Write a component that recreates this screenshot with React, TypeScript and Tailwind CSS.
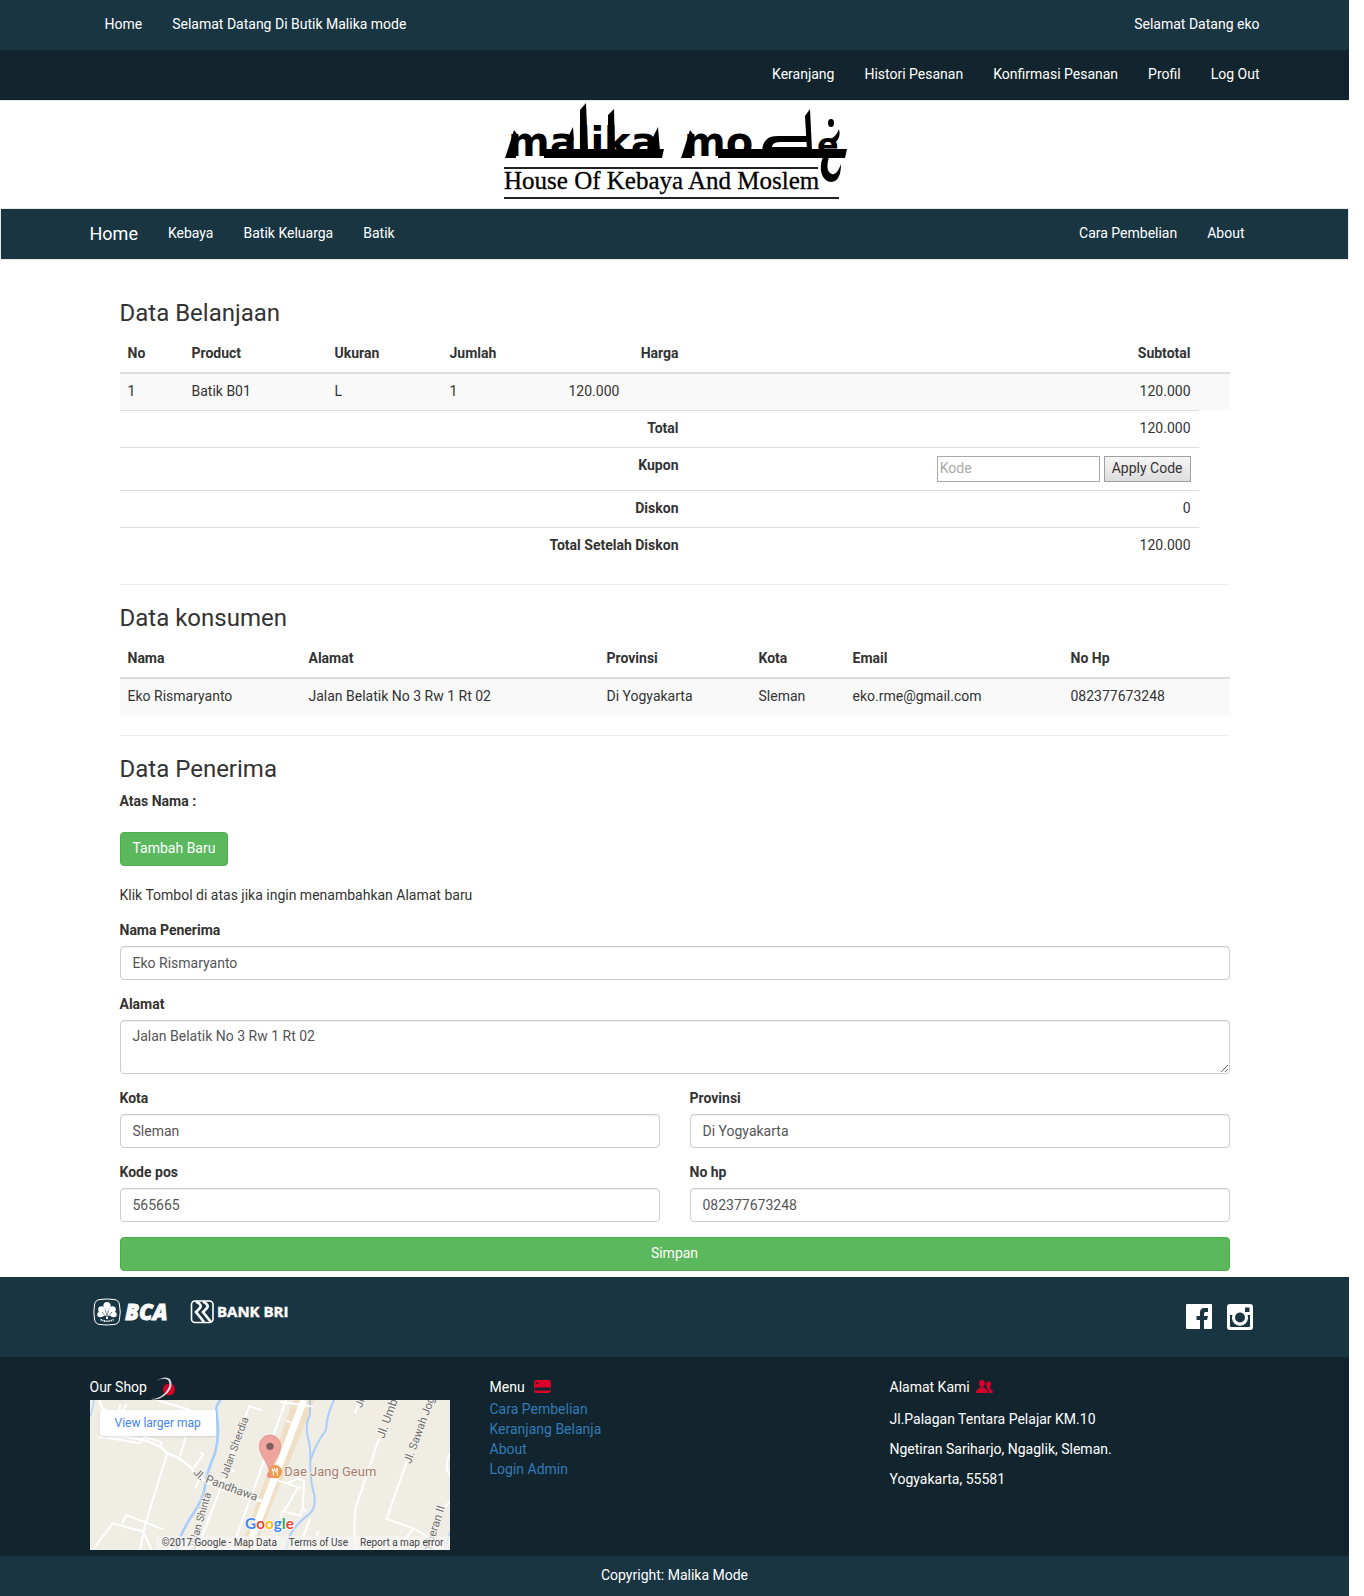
import type { ReactNode } from "react";

const cartTotals = [
  { label: "Total", value: "120.000" },
  { label: "Kupon", coupon: true },
  { label: "Diskon", value: "0" },
  { label: "Total Setelah Diskon", value: "120.000" },
];

function NavLink({ children }: { children: ReactNode }) {
  return (
    <a href="#" className="block px-[15px] pt-[14px] pb-4 text-white hover:underline">
      {children}
    </a>
  );
}

function Logo() {
  return (
    <svg width="345" height="100" viewBox="0 0 345 100" role="img" aria-label="Malika Mode, House Of Kebaya And Moslem">
      <g fill="#000" fontFamily="'DejaVu Sans', sans-serif" fontWeight="700" fontSize="40">
        <text x="4" y="55">malika</text>
        <text x="180" y="55">mo</text>
        <text x="313" y="55" fontSize="32">e</text>
      </g>
      <path d="M4 48H12V57H1Z M40 48H160L158 57H40Z M180 48H188V57H177Z M214 48H343L341 57H214Z" />
      <path d="M76 50V9L82 2L84 50Z M104 50V14L110 8L111 50Z M303 50L301 15L306 8L308 50Z" />
      <path d="M4 48L10 29L14 34L12 48Z M180 48L186 29L190 34L188 48Z M64 36L69 26L70 40Z M149 36L154 26L156 50H149Z" />
      <path d="M258 50C259 39 264 35 274 35H303V41H276C270 41 268 44 268 46H304V50Z" />
      <ellipse cx="327" cy="22" rx="3" ry="4" />
      <path d="M326 38Q332 36 335 28Q337 36 332 41Z" />
      <path d="M319 56C314 68 318 81 328 81C335 80 337 72 337 63C334 71 331 74 328 73C322 71 323 63 325 56Z" />
      <path d="M0 66H314V68H0Z M0 96H335V98H0Z" fill="#222" />
      <text x="0" y="88" fontFamily="'Liberation Serif', serif" fontSize="25" stroke="#000" strokeWidth="0.3">
        House Of Kebaya And Moslem
      </text>
    </svg>
  );
}

function Bca() {
  return (
    <svg width="84" height="28" viewBox="0 0 84 28" role="img" aria-label="BCA">
      <path d="M7 1.500Q14 .5 21 1.500Q26 2 26.500 7Q28 14 26.500 21Q26 26 21 26.500Q14 27.500 7 26.500Q2 26 1.500 21Q.2 14 1.500 7Q2 2 7 1.500Z" fill="none" stroke="#fff" strokeWidth="1" />
      <g fill="#fff">
        <circle cx="14" cy="7.500" r="3.600" />
        <circle cx="8.500" cy="11.500" r="3.300" />
        <circle cx="19.500" cy="11.500" r="3.300" />
        <ellipse cx="7.500" cy="16.500" rx="3.300" ry="2.700" />
        <ellipse cx="20.500" cy="16.500" rx="3.300" ry="2.700" />
        <path d="M14 8L18 14L21 18H15V21H13V18H7L10 14Z" />
      </g>
      <path d="M14 19L12.500 12M14 19L15.500 12M13 19L9 14M15 19L19 14" stroke="#1a3542" strokeWidth="0.600" />
      <path d="M7.500 21.500Q14 25 20.500 21.500" fill="none" stroke="#fff" strokeWidth="1.600" strokeDasharray="1.200 .6" />
      <text x="32" y="22" fill="#fff" stroke="#fff" strokeWidth="0.800" fontFamily="'Open Sans', sans-serif" fontStyle="italic" fontWeight="800" fontSize="22">BCA</text>
    </svg>
  );
}

function Bri() {
  return (
    <svg width="106" height="28" viewBox="0 0 106 28" role="img" aria-label="Bank BRI">
      <rect x="1.500" y="3" width="21.500" height="21.500" rx="3.500" fill="none" stroke="#fff" strokeWidth="1.600" />
      <g fill="none" stroke="#fff" strokeWidth="2.600">
        <path d="M6 3.500Q13 7 9.500 10.500L6 14L14 24" />
        <path d="M13 3.500Q20 7 16.500 10.500L13 14L21 24" />
      </g>
      <text x="27" y="19" fill="#fff" stroke="#fff" strokeWidth="0.400" fontFamily="'Open Sans', sans-serif" fontWeight="700" fontSize="15">BANK BRI</text>
    </svg>
  );
}

function Facebook() {
  return (
    <svg width="26" height="26" viewBox="0 0 26 26" aria-hidden="true">
      <path fill="#fff" fillRule="evenodd" d="M1 0H25Q26 0 26 1V24Q26 25 25 25H18V16H21L22 12H18V9.500Q18 8 19.500 8H22V4H18.500Q14 4 14 8.500V12H10.500V16H14V25H1Q0 25 0 24V1Q0 0 1 0Z" />
    </svg>
  );
}

function Instagram() {
  return (
    <svg width="26" height="26" viewBox="0 0 26 26" aria-hidden="true">
      <path
        fill="#fff"
        fillRule="evenodd"
        d="M3 0H23Q26 0 26 3V23Q26 26 23 26H3Q0 26 0 23V3Q0 0 3 0ZM18 3.500V8H22.500V3.500ZM3 11V22Q3 23 4 23H22Q23 23 23 22V11H20.500A8 8 0 1 1 5.500 11ZM13 8.500A5 5 0 1 0 13 18.500A5 5 0 1 0 13 8.500Z"
      />
    </svg>
  );
}

function ShopMap() {
  return (
    <div className="relative h-[150px] w-[360px] max-w-full overflow-hidden bg-[#f0ede5]">
      <svg width="360" height="150" viewBox="30 105 1080 450" aria-hidden="true">
        <path d="M640 105H705L520 555H480Z" fill="#f0dfc4" />
        <g fill="none" stroke="#aacdfb" strokeWidth="8">
          <path d="M422 105Q405 120 410 150Q420 210 405 265Q380 320 372 380Q360 420 330 460Q300 510 288 555" />
          <path d="M690 105V150Q675 175 683 215Q692 240 691 290Q690 350 704 395Q706 430 690 445Q650 475 630 510L618 555" strokeWidth="6" />
          <path d="M762 105Q740 150 738 195Q705 240 692 285" strokeWidth="6" />
          <path d="M42 105Q40 130 30 155M1110 500L1095 555" strokeWidth="4" />
        </g>
        <g fill="none" stroke="#fff" strokeWidth="6">
          <path d="M60 105Q60 135 85 140M85 213Q220 215 262 265Q320 285 350 330Q400 370 530 405L550 408" strokeWidth="8" />
          <path d="M55 215L125 225L180 235L192 215L245 232L242 245M318 213L300 275M230 105L330 135" />
          <path d="M262 265L195 480L180 555M40 552L98 475L190 500L215 555M128 475L138 450L250 493M140 118L130 135M120 118V135" />
          <path d="M358 262L370 268L340 310M345 370L365 330M548 137L508 123L440 310L465 320M445 310L350 555" />
          <path d="M618 105L455 555M600 110L700 125M575 340L620 355L655 340L672 348L668 430L680 440M620 355L665 370M655 365L612 440L660 452L668 430M612 435L600 455M690 460L655 555M715 498L695 555" />
          <path d="M838 105L825 145M897 220L825 435L823 500L828 555M980 290L920 462L1000 490L1060 525M1000 490L970 530M1110 265Q1090 310 1110 330M1090 430L1110 410" />
        </g>
        <path d="M672 105L515 520" stroke="#fff" strokeWidth="21" />
        <path d="M618 167L634 173" stroke="#fff" strokeWidth="5" />
        <g fill="#707070" stroke="#f5f3ed" strokeWidth="6" paintOrder="stroke" fontFamily="Roboto, sans-serif" fontSize="32">
          <text transform="translate(440 342) rotate(-70)">Jalan Sherdia</text>
          <text transform="translate(345 555) rotate(-74)">Jalan Shinta</text>
          <text transform="translate(338 325) rotate(42)">Jl.</text>
          <text transform="translate(374 352) rotate(20)" fontSize="35">Pandhawa</text>
          <text transform="translate(845 130) rotate(-70)">Jl.</text>
          <text transform="translate(912 222) rotate(-70)" fontSize="36">Jl. Umbul</text>
          <text transform="translate(992 298) rotate(-70)" fontSize="34">Jl. Sawah Joglo</text>
          <text transform="translate(1050 565) rotate(-72)" fontSize="35">mberan II</text>
        </g>
        <path d="M570 330C565 285 538 275 538 243A32 33 0 0 1 602 243C602 275 576 285 570 330Z" fill="#efa59d" stroke="#dd8b83" strokeWidth="2" />
        <circle cx="570" cy="244" r="11" fill="#80605d" />
        <circle cx="570" cy="330" r="9" fill="#e98b80" />
        <circle cx="586" cy="320" r="20" fill="#f19a4d" />
        <path d="M577 309V318M583 309V318M577 317H583M580 317V332M592 332V309Q586 311 588 321H592" fill="none" stroke="#fff" strokeWidth="3" />
        <text x="613" y="333" fill="#a87e70" stroke="#f5f3ed" strokeWidth="5" paintOrder="stroke" fontFamily="Roboto, sans-serif" fontSize="39">Dae Jang Geum</text>
        <text x="495" y="493" stroke="#fff" strokeWidth="5" paintOrder="stroke" fontFamily="Lato, sans-serif" fontWeight="700" fontSize="46">
          <tspan fill="#4285f4">G</tspan><tspan fill="#ea4335">o</tspan><tspan fill="#fbbc05">o</tspan><tspan fill="#4285f4">g</tspan><tspan fill="#34a853">l</tspan><tspan fill="#ea4335">e</tspan>
        </text>
      </svg>
      <a href="#" className="absolute top-[10px] left-[10px] rounded-xs bg-white px-[15px] py-[5px] text-[12px] leading-4 text-[#4285f4] shadow">
        View larger map
      </a>
      <div className="absolute right-0 bottom-0 flex bg-[#f5f5f5]/70 text-[10px] leading-[14px] text-[#444]">
        <span className="px-[6px]">©2017 Google - Map Data</span>
        <a href="#" className="px-[6px]">Terms of Use</a>
        <a href="#" className="px-[6px]">Report a map error</a>
      </div>
    </div>
  );
}

function Field({ id, label, value, area }: { id: string; label: string; value: string; area?: boolean }) {
  const look = "block w-full rounded border border-[#ccc] bg-white px-3 leading-5 text-[#555] shadow-[inset_0_1px_1px_rgba(0,0,0,0.075)] outline-none focus:border-[#66afe9]";
  return (
    <div>
      <label htmlFor={id} className="mb-[6px] block font-bold">{label}</label>
      {area ? (
        <textarea id={id} defaultValue={value} className={`${look} h-[54px] py-[5px]`} />
      ) : (
        <input id={id} type="text" defaultValue={value} className={`${look} h-[34px] py-[6px]`} />
      )}
    </div>
  );
}

function Heading({ children }: { children: ReactNode }) {
  return <h3 className="mb-[10px] text-[24px] leading-[26px] font-normal">{children}</h3>;
}

export default function App() {
  return (
    <div className="bg-white pr-[15px] font-[Roboto,sans-serif] text-[14px] leading-5 text-[#333]">
      <header>
        <div className="bg-[#1a3542]">
          <nav className="mx-auto flex max-w-[1170px] justify-between">
            <div className="flex">
              <NavLink>Home</NavLink>
              <NavLink>Selamat Datang Di Butik Malika mode</NavLink>
            </div>
            <div className="-mr-[15px]"><NavLink>Selamat Datang eko</NavLink></div>
          </nav>
        </div>
        <div className="bg-[#12252e]">
          <nav className="mx-auto flex max-w-[1170px] justify-end">
            <div className="-mr-[15px] flex">
              <NavLink>Keranjang</NavLink>
              <NavLink>Histori Pesanan</NavLink>
              <NavLink>Konfirmasi Pesanan</NavLink>
              <NavLink>Profil</NavLink>
              <NavLink>Log Out</NavLink>
            </div>
          </nav>
        </div>
        <div className="flex justify-center border-t border-[#e7e7e7] pb-[7px] pl-1">
          <Logo />
        </div>
        <div className="border border-[#e7e7e7] bg-[#1a3542]">
          <nav className="mx-auto flex max-w-[1170px] justify-between">
            <div className="flex">
              <a href="#" className="py-[15px] pr-[15px] text-[18px] text-white">Home</a>
              <NavLink>Kebaya</NavLink>
              <NavLink>Batik Keluarga</NavLink>
              <NavLink>Batik</NavLink>
            </div>
            <div className="flex">
              <NavLink>Cara Pembelian</NavLink>
              <NavLink>About</NavLink>
            </div>
          </nav>
        </div>
      </header>

      <main className="mx-auto max-w-[1170px] px-[30px] pt-10 pb-[6px]">
        <Heading>Data Belanjaan</Heading>
        <table className="w-full table-fixed border-separate border-spacing-0 text-left">
          <colgroup>
            <col className="w-[64px]" />
            <col className="w-[143px]" />
            <col className="w-[115px]" />
            <col className="w-[119px]" />
            <col className="w-[126px]" />
            <col className="w-[512px]" />
            <col className="w-[31px]" />
          </colgroup>
          <thead>
            <tr className="*:border-b-2 *:border-[#ddd] *:px-2 *:pt-[7px] *:pb-[9px]">
              <th>No</th>
              <th>Product</th>
              <th>Ukuran</th>
              <th>Jumlah</th>
              <th className="text-right">Harga</th>
              <th className="text-right">Subtotal</th>
              <td />
            </tr>
          </thead>
          <tbody>
            <tr className="bg-[#f9f9f9] *:px-2 *:pt-[7px] *:pb-[9px]">
              <td>1</td>
              <td>Batik B01</td>
              <td>L</td>
              <td>1</td>
              <td>120.000</td>
              <td className="text-right">120.000</td>
              <td />
            </tr>
            {cartTotals.map((row) => (
              <tr key={row.label} className="text-right align-top *:border-t *:border-[#ddd] *:px-2 *:pt-[7px] *:pb-[9px]">
                <th colSpan={5}>{row.label}</th>
                <td>
                  {row.coupon ? (
                    <div className="-mb-px flex justify-end gap-1 pt-px">
                      <input aria-label="Kode kupon" placeholder="Kode" className="h-[26px] w-[163px] border border-[#a9a9a9] bg-white px-[2px] pb-[2px] placeholder:text-[#a9a9a9]" />
                      <button type="button" className="h-[26px] border border-[#a0a0a0] bg-linear-to-b from-[#f6f6f6] to-[#dddddd] px-[7px] pb-[2px]">Apply Code</button>
                    </div>
                  ) : (
                    row.value
                  )}
                </td>
              </tr>
            ))}
          </tbody>
        </table>
        <hr className="my-5 border-[#eee]" />

        <Heading>Data konsumen</Heading>
        <table className="w-full table-fixed border-separate border-spacing-0 text-left">
          <colgroup>
            <col className="w-[181px]" />
            <col className="w-[298px]" />
            <col className="w-[152px]" />
            <col className="w-[94px]" />
            <col className="w-[218px]" />
            <col className="w-[167px]" />
          </colgroup>
          <thead>
            <tr className="*:border-b-2 *:border-[#ddd] *:px-2 *:pt-[7px] *:pb-[9px]">
              <th>Nama</th>
              <th>Alamat</th>
              <th>Provinsi</th>
              <th>Kota</th>
              <th>Email</th>
              <th>No Hp</th>
            </tr>
          </thead>
          <tbody>
            <tr className="bg-[#f9f9f9] *:px-2 *:pt-[7px] *:pb-[9px]">
              <td>Eko Rismaryanto</td>
              <td>Jalan Belatik No 3 Rw 1 Rt 02</td>
              <td>Di Yogyakarta</td>
              <td>Sleman</td>
              <td>eko.rme@gmail.com</td>
              <td>082377673248</td>
            </tr>
          </tbody>
        </table>
        <hr className="my-5 border-[#eee]" />

        <h3 className="mb-[9px] text-[24px] leading-[26px] font-normal">Data Penerima</h3>
        <p className="mb-[21px] font-bold">Atas Nama :</p>
        <button type="button" className="block h-[34px] rounded border border-[#4cae4c] bg-[#5cb85c] px-3 pb-[2px] text-white">Tambah Baru</button>
        <p className="mt-[19px] mb-[15px]">Klik Tombol di atas jika ingin menambahkan Alamat baru</p>
        <form className="flex flex-col gap-[14px]">
          <Field id="nama" label="Nama Penerima" value="Eko Rismaryanto" />
          <Field id="alamat" label="Alamat" value="Jalan Belatik No 3 Rw 1 Rt 02" area />
          <div className="grid grid-cols-2 gap-x-[30px] gap-y-[14px] pb-px">
            <Field id="kota" label="Kota" value="Sleman" />
            <Field id="provinsi" label="Provinsi" value="Di Yogyakarta" />
            <Field id="kodepos" label="Kode pos" value="565665" />
            <Field id="nohp" label="No hp" value="082377673248" />
          </div>
          <button type="button" className="block h-[34px] w-full rounded border border-[#4cae4c] bg-[#5cb85c] pb-[2px] text-white">Simpan</button>
        </form>
      </main>

      <footer className="text-white">
        <div className="h-20 bg-[#1a3542]">
          <div className="mx-auto flex max-w-[1170px] justify-between">
            <div className="flex gap-[13px] pt-[21px] pl-[3px]">
              <Bca />
              <Bri />
            </div>
            <div className="flex gap-[15px] pt-[27px] pr-[7px]">
              <a href="#" aria-label="Facebook"><Facebook /></a>
              <a href="#" aria-label="Instagram"><Instagram /></a>
            </div>
          </div>
        </div>
        <div className="bg-[#12252e] pt-5 pb-[6px]">
          <div className="mx-auto grid max-w-[1170px] grid-cols-3 gap-x-[30px]">
            <section>
              <h4 className="flex h-[23px] items-start gap-1">
                Our Shop
                <svg width="24" height="23" viewBox="0 0 24 23" aria-hidden="true">
                  <circle cx="18" cy="12.500" r="6" fill="#d80027" />
                  <path d="M5 4Q14 -2 19 2Q24 11 13 19Q6 24 0 22Q8 22 14 16Q21 8 17 3Q12 0 5 4Z" fill="#d5dadc" />
                </svg>
              </h4>
              <ShopMap />
            </section>
            <section>
              <h4 className="flex h-[22px] items-start gap-[9px]">
                Menu
                <svg width="17" height="13" viewBox="0 0 17 13" className="mt-[3px]" aria-hidden="true">
                  <path fill="#d80027" fillRule="evenodd" d="M2 0H15Q17 0 17 2V11Q17 13 15 13H2Q0 13 0 11V2Q0 0 2 0ZM3 2.200A1 1 0 1 0 3 4.200A1 1 0 1 0 3 2.200ZM.6 7.500V10.500H16.400V7.500Z" />
                </svg>
              </h4>
              <ul className="text-[#337ab7]">
                <li><a href="#">Cara Pembelian</a></li>
                <li><a href="#">Keranjang Belanja</a></li>
                <li><a href="#">About</a></li>
                <li><a href="#">Login Admin</a></li>
              </ul>
            </section>
            <section>
              <h4 className="flex h-[22px] items-start gap-[6px]">
                Alamat Kami
                <svg width="17" height="13" viewBox="0 0 17 13" className="mt-[3px]" aria-hidden="true">
                  <g fill="#d80027">
                    <path d="M6 0Q9 0 9 3Q9 5 7.500 6.500V8L10 9Q12 10 12 13H0Q0 10 2 9L4.500 8V6.500Q3 5 3 3Q3 0 6 0Z" />
                    <path d="M12.500 1.500Q15.300 1.500 15 4.500Q15 6 14 7V8.500Q17 9.500 17 13H13Q13 9.500 10.500 8.300L11 8V7Q10 6 10 4Q10 1.500 12.500 1.500Z" />
                  </g>
                </svg>
              </h4>
              <address className="mt-[10px] flex flex-col gap-[10px] not-italic">
                <p>Jl.Palagan Tentara Pelajar KM.10</p>
                <p>Ngetiran Sariharjo, Ngaglik, Sleman.</p>
                <p>Yogyakarta, 55581</p>
              </address>
            </section>
          </div>
        </div>
        <div className="bg-[#1a3542] pt-[9px] pb-[11px] text-center">Copyright: Malika Mode</div>
      </footer>
    </div>
  );
}
